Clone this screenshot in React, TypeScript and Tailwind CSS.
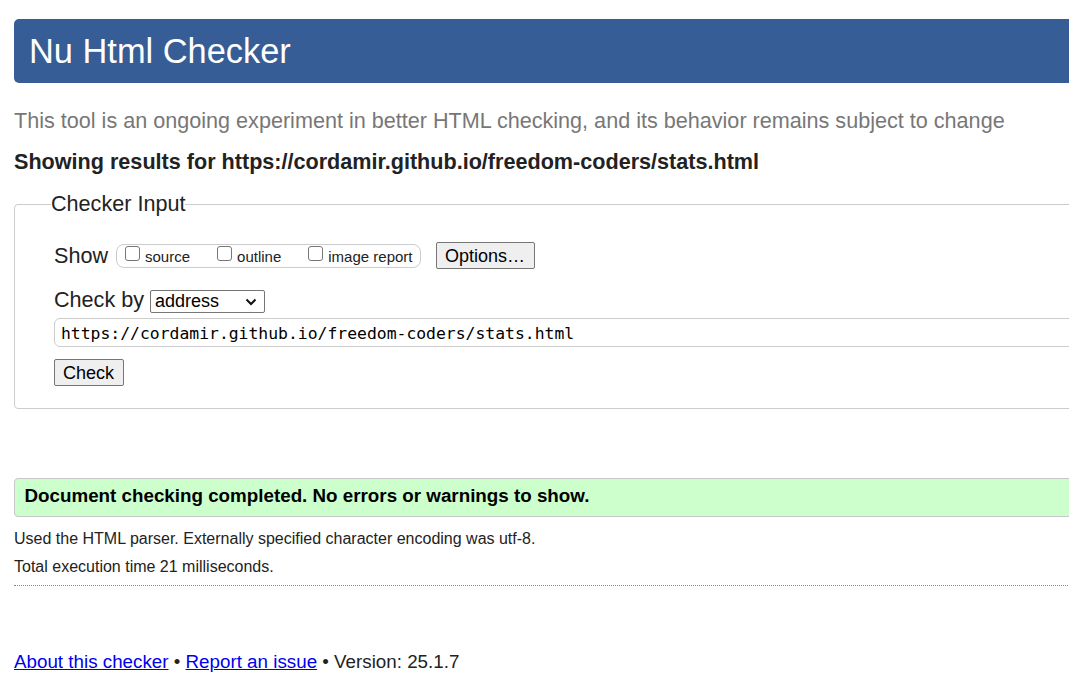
import React from 'react';

const sans = { fontFamily: '"Liberation Sans", Arial, sans-serif' };

const CheckBox: React.FC = () => (
    <span className="block w-[15px] h-[15px] mt-[0.5px] border border-[#767676] rounded-[3px] bg-white" />
);

const ShowOption: React.FC<{ label: string }> = ({ label }) => (
    <div className="flex items-start gap-[5.5px]">
        <CheckBox />
        <span className="text-[15px] leading-[17px] mt-[2.5px] text-[#222]">{label}</span>
    </div>
);

const GrayButton: React.FC<{ children: React.ReactNode }> = ({ children }) => (
    <button
        type="button"
        className="h-[27px] pl-[8px] pr-[9px] pt-[1px] text-[18px] leading-[24px] text-black bg-[#efefef] border border-[#767676] rounded-[2px]"
    >
        {children}
    </button>
);

export default function App() {
    return (
        <div className="w-[1069px] h-[699px] overflow-hidden bg-white text-[#222]" style={sans}>
            <div className="w-[1130px] pl-[14px]">
                {/* Title bar */}
                <div className="mt-[19px] h-[64px] bg-[#365d95] rounded-l-[5px] pl-[15px]">
                    <h1 className="text-[34.4px] leading-[64px] font-normal text-white">Nu Html Checker</h1>
                </div>

                <p className="mt-[25px] text-[21.6px] leading-[26px] text-[#777]">
                    This tool is an ongoing experiment in better HTML checking, and its behavior remains subject to change
                </p>

                <p className="mt-[15px] text-[21.6px] leading-[26px] font-bold text-[#222]">
                    Showing results for https://cordamir.github.io/freedom-coders/stats.html
                </p>

                {/* Checker input */}
                <fieldset className="mt-[16px] border border-[#cccccc] rounded-[4px] pl-[39px] pt-[25px] pb-[21.5px]">
                    <legend className="ml-[-3px] px-0 text-[21.6px] leading-[26px] text-[#222]">Checker Input</legend>

                    {/* Show row */}
                    <div className="flex items-start h-[27px]">
                        <span className="text-[21.6px] leading-[26px] mt-[0.5px]">Show</span>
                        <div className="ml-[7.5px] mt-[2px] h-[24px] flex items-start gap-[26.5px] pl-[8px] pr-[7.5px] border border-[#cccccc] rounded-[8px]">
                            <ShowOption label="source" />
                            <ShowOption label="outline" />
                            <ShowOption label="image report" />
                        </div>
                        <div className="ml-[15px]">
                            <GrayButton>Options…</GrayButton>
                        </div>
                    </div>

                    {/* Check by row */}
                    <div className="flex items-start mt-[17.5px]">
                        <span className="text-[21.6px] leading-[26px] mt-[0.5px]">Check by</span>
                        <div className="ml-[6px] mt-[3px] h-[23px] w-[115px] flex items-center justify-between pl-[4px] pr-[7px] pb-[1px] border border-[#767676] rounded-[2px] bg-white">
                            <span className="text-[18px] leading-[20px] text-black">address</span>
                            <svg width="12" height="8" viewBox="0 0 12 8" className="mt-[2px]">
                                <polyline points="1.5,1.5 6,6 10.5,1.5" fill="none" stroke="#111" strokeWidth="2" />
                            </svg>
                        </div>
                    </div>

                    {/* Address input */}
                    <div className="mt-[5px] h-[29px] flex items-center pl-[6px] pt-[2px] border border-[#cccccc] rounded-[6px]">
                        <span
                            className="text-[16.4px] leading-[20px] text-black"
                            style={{ fontFamily: '"DejaVu Sans Mono", "Liberation Mono", monospace' }}
                        >
                            https://cordamir.github.io/freedom-coders/stats.html
                        </span>
                    </div>

                    <div className="mt-[12px]">
                        <GrayButton>Check</GrayButton>
                    </div>
                </fieldset>

                {/* Result */}
                <div className="mt-[69px] h-[39px] bg-[#ccffcc] border border-[#c8c8c8] rounded-l-[4px] pl-[9.5px] pt-[6.5px]">
                    <p className="text-[18.8px] leading-[22px] font-bold text-black">
                        Document checking completed. No errors or warnings to show.
                    </p>
                </div>

                <p className="mt-[12px] text-[16px] leading-[20px] text-[#222]">
                    Used the HTML parser. Externally specified character encoding was utf-8.
                </p>
                <p className="mt-[8px] text-[16px] leading-[20px] text-[#222]">
                    Total execution time 21 milliseconds.
                </p>

                <div className="mt-[8px] border-t border-dotted border-[#888]" />

                {/* Footer */}
                <p className="mt-[65px] text-[18.8px] leading-[22px] text-[#222]">
                    <a href="#" className="text-[#0000ee] underline">About this checker</a>
                    {' • '}
                    <a href="#" className="text-[#0000ee] underline">Report an issue</a>
                    {' • Version: 25.1.7'}
                </p>
            </div>
        </div>
    );
}
